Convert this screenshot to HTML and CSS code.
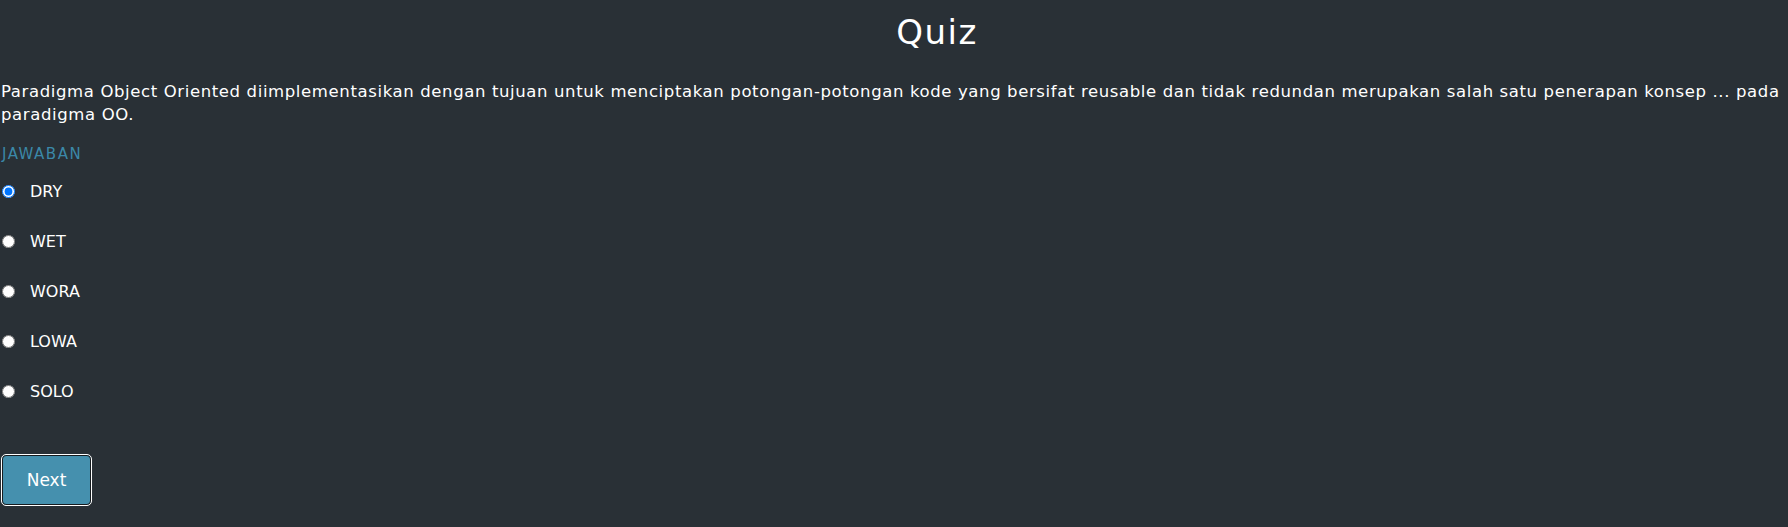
FILE: index.html
```html
<!DOCTYPE html>
<html lang="id">
<head>
<meta charset="utf-8">
<title>Quiz</title>
<link rel="stylesheet" href="styles.css">
</head>
<body>
<main class="quiz">
  <h1 class="quiz-title">Quiz</h1>
  <p class="question">Paradigma Object Oriented diimplementasikan dengan tujuan untuk menciptakan potongan-potongan kode yang bersifat reusable dan tidak redundan merupakan salah satu penerapan konsep ... pada paradigma OO.</p>
  <div class="answer-label">JAWABAN</div>
  <form class="options">
    <label class="option"><input type="radio" name="jawaban" checked><span>DRY</span></label>
    <label class="option"><input type="radio" name="jawaban"><span>WET</span></label>
    <label class="option"><input type="radio" name="jawaban"><span>WORA</span></label>
    <label class="option"><input type="radio" name="jawaban"><span>LOWA</span></label>
    <label class="option"><input type="radio" name="jawaban"><span>SOLO</span></label>
  </form>
  <button class="next-btn" type="button">Next</button>
</main>
</body>
</html>
```
FILE: styles.css
```css
html, body {
  margin: 0;
  padding: 0;
  background: #293036;
}
body {
  color: #ffffff;
  font-family: "DejaVu Sans", Inter, sans-serif;
  height: 527px;
  overflow: hidden;
}
.quiz {
  display: flex;
  flex-direction: column;
  align-items: flex-start;
}
.quiz-title {
  align-self: stretch;
  margin: 13px 0 0 0;
  padding-left: 86px;
  text-align: center;
  font-size: 34px;
  font-weight: 500;
  line-height: 38px;
  letter-spacing: 1.5px;
}
.question {
  margin: 29px 0 0 0;
  padding-left: 1px;
  font-size: 16.5px;
  line-height: 23px;
  letter-spacing: 0.62px;
}
.answer-label {
  margin-top: 18px;
  padding-left: 2px;
  font-size: 15px;
  line-height: 20px;
  letter-spacing: 1.5px;
  color: #3b88a8;
}
.options {
  display: flex;
  flex-direction: column;
  gap: 26px;
  margin-top: 15px;
}
.option {
  display: flex;
  align-items: center;
  height: 24px;
  font-size: 16px;
}
.option input {
  width: 13px;
  height: 13px;
  margin: 0 15px 0 2px;
}
.next-btn {
  margin: 52px 0 0 2px;
  width: 89px;
  height: 50px;
  background: #4590ae;
  color: #ffffff;
  border: 1px solid #161b1f;
  outline: 1px solid #ffffff;
  border-radius: 4px;
  font-family: "DejaVu Sans", Inter, sans-serif;
  font-size: 17px;
}
```
